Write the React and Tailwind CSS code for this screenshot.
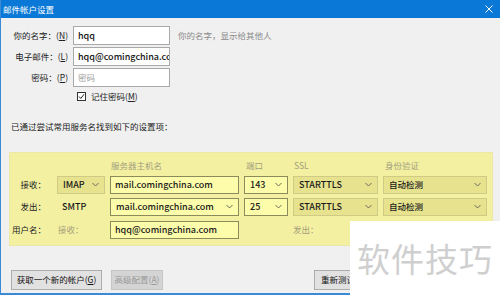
import React from "react";

const F = { fontFamily: '"Noto Sans CJK SC", "Noto Sans", sans-serif' };

function Chevron() {
  return (
    <svg width="7" height="5" viewBox="0 0 7 5" className="shrink-0">
      <polyline points="0.5,1 3.5,4 6.5,1" fill="none" stroke="#6b6b5a" strokeWidth="1" />
    </svg>
  );
}

function Sel({ children, bright, className = "" }) {
  return (
    <div
      className={
        "h-[18px] flex items-center justify-between pl-[5px] pr-[5px] border text-[9px] font-medium text-[#1a1a1a] whitespace-nowrap " +
        (bright ? "bg-[#fdfcaa] border-[#8c8b5c] " : "bg-[#e6e28e] border-[#cfcb86] ") +
        className
      }
    >
      <span className="leading-none">{children}</span>
      <Chevron />
    </div>
  );
}

function Inp({ children, className = "" }) {
  return (
    <div
      className={
        "h-[18px] flex items-center pl-[4px] border bg-[#fdfcaa] border-[#8c8b5c] text-[9px] font-medium text-[#1a1a1a] overflow-hidden whitespace-nowrap " +
        className
      }
    >
      <span className="leading-none">{children}</span>
    </div>
  );
}

const lab = "text-[8.5px] text-[#222] leading-none whitespace-nowrap";
const hdr = "text-[8.5px] text-[#a39f7b] leading-none whitespace-nowrap";

export default function App() {
  return (
    <div
      className="relative w-[500px] h-[295px] overflow-hidden bg-[#f0f0f0] border-l border-[#3a8ad6] flex flex-col"
      style={F}
    >
      {/* Title bar */}
      <div className="h-[18px] bg-[#0a78d6] flex items-center justify-between pl-[2px] pr-[7px] shrink-0">
        <span className="text-white text-[8.5px] leading-none">邮件帐户设置</span>
        <svg width="8" height="8" viewBox="0 0 8 8">
          <path d="M0.5 0.5 L7.5 7.5 M7.5 0.5 L0.5 7.5" stroke="white" strokeWidth="1" />
        </svg>
      </div>

      {/* Top form */}
      <div className="flex flex-col gap-[2px] pt-[8px]">
        <div className="flex items-center">
          <div className={"w-[67px] text-right " + lab}>
            你的名字：(<span className="underline">N</span>)
          </div>
          <div className="ml-[5px] w-[97px] h-[19px] bg-white border border-[#a9a9a9] flex items-center pl-[4px] text-[9px] font-medium text-[#111]">
            hqq
          </div>
          <div className="ml-[8px] text-[8.5px] text-[#8a8a8a] leading-none">你的名字，显示给其他人</div>
        </div>
        <div className="flex items-center">
          <div className={"w-[67px] text-right " + lab}>
            电子邮件：(<span className="underline">L</span>)
          </div>
          <div className="ml-[5px] w-[97px] h-[19px] bg-white border border-[#a9a9a9] flex items-center pl-[4px] text-[9px] font-medium text-[#111] overflow-hidden whitespace-nowrap">
            hqq@comingchina.com
          </div>
        </div>
        <div className="flex items-center">
          <div className={"w-[67px] text-right " + lab}>
            密码：(<span className="underline">P</span>)
          </div>
          <div className="ml-[5px] w-[97px] h-[19px] bg-white border border-[#a9a9a9] flex items-center pl-[4px] text-[8.5px] text-[#a0a0a0]">
            密码
          </div>
        </div>
        <div className="flex items-center pl-[76px] pt-[3px] gap-[5px]">
          <svg width="9" height="9" viewBox="0 0 9 9">
            <rect x="0.5" y="0.5" width="8" height="8" fill="white" stroke="#333" strokeWidth="1" />
            <polyline points="2,4.5 3.8,6.5 7,2.3" fill="none" stroke="#222" strokeWidth="1" />
          </svg>
          <span className={lab}>
            记住密码(<span className="underline">M</span>)
          </span>
        </div>
      </div>

      <div className={"pl-[10px] pt-[21px] " + lab}>已通过尝试常用服务名找到如下的设置项：</div>

      {/* Yellow panel */}
      <div className="ml-[8px] mt-[21px] w-[484px] bg-[#f3f0a2] border border-[#ebe8a8] pt-[6px] pb-[6px] grid grid-cols-[42px_48px_129px_44px_85px_104px] gap-x-[5px] gap-y-[4px] items-center">
        <div />
        <div />
        <div className={"pl-[1px] h-[13px] flex items-center " + hdr}>服务器主机名</div>
        <div className={"pl-[2px] " + hdr}>端口</div>
        <div className={"pl-[1px] " + hdr}>SSL</div>
        <div className={"pl-[2px] " + hdr}>身份验证</div>

        <div className={"text-right pr-[6px] " + lab}>接收：</div>
        <Sel>IMAP</Sel>
        <Inp>mail.comingchina.com</Inp>
        <Sel bright>143</Sel>
        <Sel>STARTTLS</Sel>
        <Sel>
          <span className="text-[8.5px]">自动检测</span>
        </Sel>

        <div className={"text-right pr-[6px] " + lab}>发出：</div>
        <div className="pl-[5px] text-[9px] font-medium text-[#1a1a1a] leading-none">SMTP</div>
        <Sel bright>mail.comingchina.com</Sel>
        <Sel bright>25</Sel>
        <Sel>STARTTLS</Sel>
        <Sel>
          <span className="text-[8.5px]">自动检测</span>
        </Sel>

        <div className={"text-right pr-[6px] " + lab}>用户名：</div>
        <div className={"pl-[1px] text-[#9a9a86] " + hdr}>接收：</div>
        <Inp className="mt-[1px]">hqq@comingchina.com</Inp>
        <div />
        <div className={"text-[#9a9a86] " + hdr}>发出：</div>
        <Inp className="mt-[1px]"> </Inp>
      </div>

      {/* Buttons */}
      <div className="flex items-center pl-[10px] mt-[24px]">
        <div className="w-[91px] h-[20px] bg-[#e1e1e1] border border-[#adadad] flex items-center justify-center text-[8.5px] text-[#111] leading-none whitespace-nowrap">
          获取一个新的帐户(<span className="underline">G</span>)
        </div>
        <div className="ml-[9px] w-[52px] h-[20px] bg-[#d4d4d4] border border-[#c4c4c4] flex items-center justify-center text-[8.5px] text-[#9a9a9a] leading-none whitespace-nowrap">
          高级配置(<span className="underline">A</span>)
        </div>
        <div className="ml-[151px] w-[60px] h-[20px] bg-[#e1e1e1] border border-[#adadad] flex items-center pl-[6px] text-[8.5px] text-[#111] leading-none whitespace-nowrap">
          重新测试
        </div>
      </div>

      <div className="absolute left-0 right-0 bottom-0 h-[2px] bg-[#3a8ad6]" />

      {/* Watermark */}
      <div className="absolute left-[349px] top-[221px] w-[151px] h-[74px] bg-white flex items-center pl-[7px]">
        <span className="text-[33px] text-[#cfcfcf] leading-none tracking-[1px]">软件技巧</span>
      </div>
    </div>
  );
}
